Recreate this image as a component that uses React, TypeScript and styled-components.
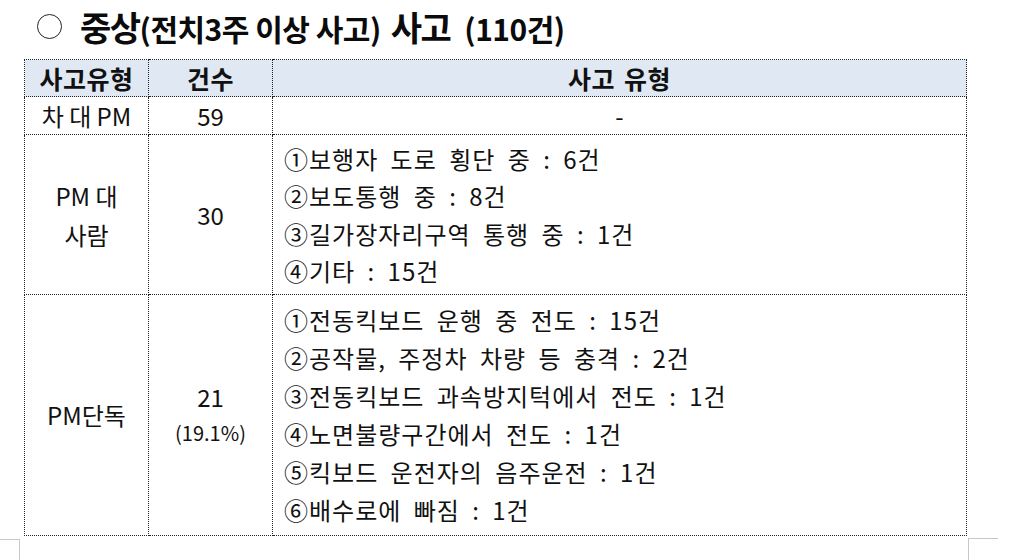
import React from 'react';
import styled, { createGlobalStyle } from 'styled-components';

const GlobalStyle = createGlobalStyle`
  html, body {
    margin: 0;
    padding: 0;
    background: #ffffff;
  }
  body {
    font-family: 'Noto Sans CJK KR', 'Noto Sans', sans-serif;
    color: #111111;
  }
`;

const Page = styled.div`
  width: 1024px;
  height: 560px;
  overflow: hidden;
  display: flex;
  flex-direction: column;
`;

const TitleRow = styled.div`
  display: flex;
  align-items: center;
  height: 59px;
  padding-left: 37px;
  padding-bottom: 6px;
  box-sizing: border-box;
`;

const Circle = styled.span`
  width: 23px;
  height: 23px;
  border: 1.5px solid #222;
  border-radius: 50%;
  margin-right: 18px;
  flex-shrink: 0;
`;

const TitleText = styled.h1`
  margin: 0;
  font-weight: 700;
  line-height: 1;
  white-space: nowrap;
  color: #0b0b0b;
`;

const Big = styled.span<{ $left?: number }>`
  font-size: 34px;
  letter-spacing: -1.5px;
  margin-left: ${(p) => p.$left ?? 0}px;
`;

const Small = styled.span<{ $left?: number }>`
  font-size: 30px;
  letter-spacing: -0.5px;
  margin-left: ${(p) => p.$left ?? 0}px;
`;

const Table = styled.table`
  margin-left: 24px;
  border-collapse: collapse;
  table-layout: fixed;
  width: 940px;
`;

const Th = styled.th<{ $w: number }>`
  width: ${(p) => p.$w}px;
  height: 36px;
  padding: 0;
  background: #dfe8f3;
  border: 1px dotted #222;
  font-size: 25px;
  font-weight: 700;
  line-height: 1;
  text-align: center;
  letter-spacing: 0.5px;
  word-spacing: 3px;
`;

const Td = styled.td<{ $h?: number }>`
  height: ${(p) => (p.$h ? `${p.$h}px` : 'auto')};
  padding: 0;
  border: 1px dotted #222;
  font-size: 24px;
  line-height: 1;
  text-align: center;
  vertical-align: middle;
`;

const Stack = styled.div<{ $lh: number }>`
  display: flex;
  flex-direction: column;
  align-items: center;
  line-height: ${(p) => p.$lh}px;
`;

const Note = styled.span`
  font-size: 20px;
`;

const ListCell = styled.div<{ $lh: number }>`
  display: flex;
  flex-direction: column;
  align-items: flex-start;
  padding: 0 0 0 11px;
  font-size: 24px;
  letter-spacing: 1px;
  word-spacing: 6px;
  line-height: ${(p) => p.$lh}px;
  text-align: left;
  white-space: nowrap;
`;

const Corners = styled.div`
  display: flex;
  margin-top: auto;
  height: 21px;
`;

const CornerLeft = styled.div`
  width: 19px;
  border-top: 1px solid #c8c8c8;
  border-right: 1px solid #c8c8c8;
`;

const CornerRight = styled.div`
  width: 29px;
  margin-left: 948px;
  margin-top: -1px;
  border-top: 1px solid #c8c8c8;
  border-left: 1px solid #c8c8c8;
`;

const pedestrian = [
  '①보행자 도로 횡단 중 : 6건',
  '②보도통행 중 : 8건',
  '③길가장자리구역 통행 중 : 1건',
  '④기타 : 15건',
];

const solo = [
  '①전동킥보드 운행 중 전도 : 15건',
  '②공작물, 주정차 차량 등 충격 : 2건',
  '③전동킥보드 과속방지턱에서 전도 : 1건',
  '④노면불량구간에서 전도 : 1건',
  '⑤킥보드 운전자의 음주운전 : 1건',
  '⑥배수로에 빠짐 : 1건',
];

export default function App(): JSX.Element {
  return (
    <Page>
      <GlobalStyle />
      <TitleRow>
        <Circle />
        <TitleText>
          <Big>중상</Big>
          <Small>(전치3주 이상 사고)</Small>
          <Big $left={10}>사고</Big>
          <Small $left={14}>(110건)</Small>
        </TitleText>
      </TitleRow>
      <Table>
        <thead>
          <tr>
            <Th $w={123}>사고유형</Th>
            <Th $w={123}>건수</Th>
            <Th $w={693}>사고 유형</Th>
          </tr>
        </thead>
        <tbody>
          <tr>
            <Td $h={37}>차 대 PM</Td>
            <Td>59</Td>
            <Td>-</Td>
          </tr>
          <tr>
            <Td $h={159}>
              <Stack $lh={39}>
                <span>PM 대</span>
                <span>사람</span>
              </Stack>
            </Td>
            <Td>30</Td>
            <Td>
              <ListCell $lh={37.5}>
                {pedestrian.map((line) => (
                  <span key={line}>{line}</span>
                ))}
              </ListCell>
            </Td>
          </tr>
          <tr>
            <Td $h={240}>PM단독</Td>
            <Td>
              <Stack $lh={36}>
                <span>21</span>
                <Note>(19.1%)</Note>
              </Stack>
            </Td>
            <Td>
              <ListCell $lh={38}>
                {solo.map((line) => (
                  <span key={line}>{line}</span>
                ))}
              </ListCell>
            </Td>
          </tr>
        </tbody>
      </Table>
      <Corners>
        <CornerLeft />
        <CornerRight />
      </Corners>
    </Page>
  );
}
